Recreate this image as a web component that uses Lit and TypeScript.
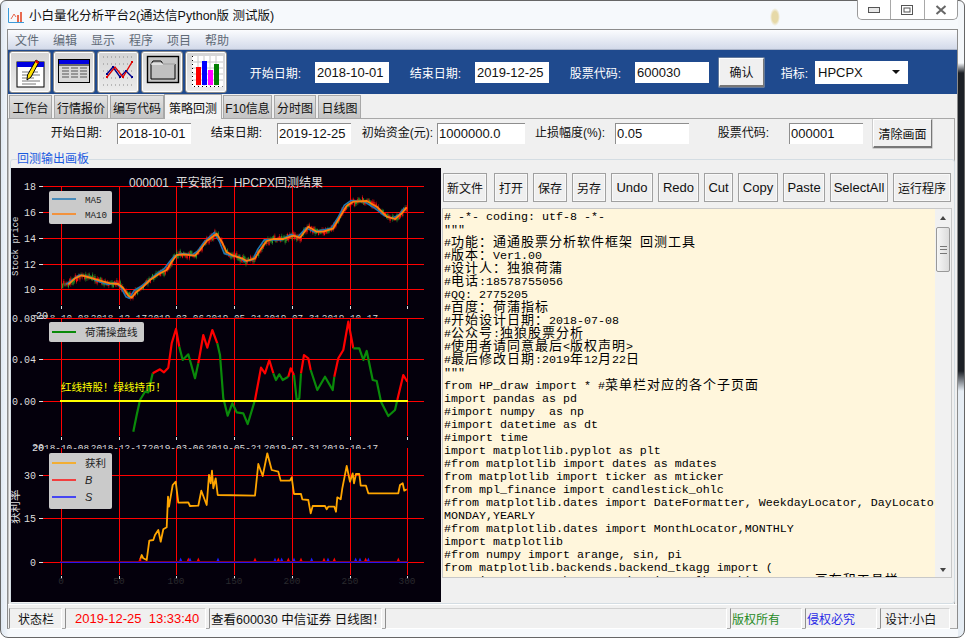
import { html, css, svg, LitElement } from 'lit'
import { customElement } from 'lit/decorators.js'

type Pt = [number, number]

const MA10: Pt[] = [
  [205, 358], [225, 340], [245, 331], [270, 338], [300, 347], [330, 355], [355, 357], [370, 370], [385, 392], [395, 398],
  [410, 380], [430, 365], [450, 345], [480, 325], [500, 315], [515, 290], [530, 270], [550, 268], [585, 272], [600, 255],
  [620, 228], [650, 206], [665, 230], [680, 262], [700, 272], [725, 280], [740, 288], [765, 280], [780, 255], [800, 228],
  [820, 222], [850, 222], [880, 212], [900, 218], [925, 185], [950, 200], [970, 200], [1000, 190], [1020, 155], [1040, 122],
  [1060, 110], [1100, 108], [1130, 125], [1160, 155], [1185, 162], [1205, 145], [1220, 127],
]

// oscillator line, split where the colour changes
const OSC: { color: string; pts: Pt[] }[] = [
  { color: '#0a8a0a', pts: [[400, 350], [410, 300], [420, 255], [435, 230], [445, 232], [458, 175]] },
  { color: '#ff0000', pts: [[458, 175], [480, 163], [492, 172], [505, 158], [515, 85], [528, 42], [538, 95]] },
  { color: '#0a8a0a', pts: [[538, 95], [548, 135], [565, 118], [585, 190], [595, 145]] },
  { color: '#ff0000', pts: [[595, 145], [610, 60], [622, 98], [637, 45], [652, 85]] },
  { color: '#0a8a0a', pts: [[652, 85], [660, 120], [670, 250], [683, 302], [697, 265], [710, 292], [730, 295], [743, 327], [765, 255]] },
  { color: '#ff0000', pts: [[765, 255], [783, 158], [795, 175], [808, 135], [820, 175]] },
  { color: '#0a8a0a', pts: [[820, 175], [828, 195], [838, 178], [848, 195], [865, 185]] },
  { color: '#ff0000', pts: [[865, 185], [872, 160], [882, 180]] },
  { color: '#0a8a0a', pts: [[882, 180], [890, 255], [898, 250], [903, 175]] },
  { color: '#ff0000', pts: [[903, 175], [912, 120], [925, 130], [932, 165]] },
  { color: '#0a8a0a', pts: [[932, 165], [952, 225], [975, 185], [998, 225], [1003, 185]] },
  { color: '#ff0000', pts: [[1003, 185], [1015, 130], [1030, 105], [1045, 20], [1060, 100]] },
  { color: '#0a8a0a', pts: [[1060, 100], [1078, 100], [1090, 135], [1100, 108], [1118, 195], [1130, 198], [1143, 260], [1165, 303], [1185, 285], [1192, 255]] },
  { color: '#ff0000', pts: [[1192, 255], [1210, 180], [1222, 200]] },
]

const PROFIT: Pt[] = [
  [420, 360], [425, 345], [430, 355], [440, 360], [448, 302], [460, 300], [465, 285], [475, 270], [482, 305], [490, 268],
  [500, 262], [504, 170], [507, 200], [512, 170], [518, 135], [527, 125], [535, 188], [565, 187], [570, 198], [595, 197],
  [604, 152], [620, 195], [627, 105], [632, 130], [636, 92], [640, 145], [647, 115], [653, 165], [765, 167], [775, 72],
  [788, 108], [802, 40], [815, 90], [835, 95], [842, 122], [870, 122], [875, 112], [882, 162], [903, 162], [907, 178],
  [925, 180], [932, 220], [938, 198], [975, 198], [980, 208], [985, 200], [1003, 200], [1008, 215], [1012, 172], [1022, 178],
  [1027, 145], [1040, 78], [1050, 125], [1058, 100], [1062, 130], [1068, 102], [1078, 102], [1082, 137], [1098, 137], [1105, 160],
  [1195, 160], [1200, 135], [1208, 130], [1213, 152], [1220, 148],
]

const BUYS = [420, 565, 595, 765, 835, 865, 903, 972, 1003, 1097, 1195]
const SELLS = [542, 570, 654, 825, 845, 882, 935, 984, 1067, 1080, 1105]
const GRID_X = [61, 119, 176, 234, 292, 350, 407]
const DATES = ['2018-10-08', '2018-12-17', '2019-03-06', '2019-05-21', '2019-07-31', '2019-10-17']

// the traced points were read off a 3x crop
const trace = (pts: Pt[], top: number) => pts.map(([x, y]) => `${(x / 3).toFixed(1)},${(top + y / 3).toFixed(1)}`).join(' ')

const noise = (i: number) => {
  const v = Math.sin(i * 12.9898) * 43758.5453
  return v - Math.floor(v)
}

const maY = (zx: number) => {
  if (zx <= MA10[0][0]) return MA10[0][1]
  for (let i = 1; i < MA10.length; i++) {
    const [x0, y0] = MA10[i - 1]
    const [x1, y1] = MA10[i]
    if (zx <= x1) return y0 + ((y1 - y0) * (zx - x0)) / (x1 - x0)
  }
  return MA10[MA10.length - 1][1]
}

@customElement('backtest-chart')
export class BacktestChart extends LitElement {
  static styles = css`
    :host {
      display: block;
      width: 430px;
      height: 434px;
      background: #04000c;
    }
    svg {
      display: block;
    }
    text {
      font-family: 'Liberation Mono', 'Noto Sans CJK SC', monospace;
      font-size: 10px;
      fill: #dcdcdc;
    }
    .title {
      font-family: 'Liberation Sans', 'Noto Sans CJK SC', sans-serif;
      font-size: 12px;
      text-anchor: middle;
      white-space: pre;
    }
    .ytick {
      text-anchor: end;
    }
    .xtick {
      text-anchor: middle;
      font-size: 9.4px;
    }
    .ylabel {
      font-size: 9px;
    }
    .dim {
      fill: #2a2a2e;
    }
    .legend {
      font-size: 9.2px;
      fill: #222;
    }
    .legend-cn {
      font-family: 'Noto Sans CJK SC', sans-serif;
      font-size: 10.5px;
    }
    .italic {
      font-family: 'Liberation Sans', sans-serif;
      font-style: italic;
      font-size: 11px;
    }
    .note {
      font-family: 'Noto Sans CJK SC', sans-serif;
      font-size: 10.5px;
      fill: #ffff00;
    }
    .axis-cn {
      font-family: 'Noto Sans CJK SC', sans-serif;
      font-size: 11.5px;
    }
  `

  private _grid(ys: number[], top: number, bottom: number) {
    return svg`
      ${ys.map((y) => svg`<line x1="43" x2="424" y1=${y + 0.5} y2=${y + 0.5} stroke="#f00" stroke-width="1"></line>
        <line x1="39" x2="43" y1=${y + 0.5} y2=${y + 0.5} stroke="#ddd"></line>`)}
      ${GRID_X.map((x) => svg`<line x1=${x + 0.5} x2=${x + 0.5} y1=${top} y2=${bottom} stroke="#f00" stroke-width="1"></line>
        <line x1=${x + 0.5} x2=${x + 0.5} y1=${bottom + 1} y2=${bottom + 4} stroke="#ddd"></line>`)}
    `
  }

  private _candles() {
    const bars = []
    for (let i = 0; i < 300; i++) {
      const x = 61.5 + i * 1.153
      const mid = 165 + maY(x * 3) / 3 + (noise(i) - 0.5) * 3.5
      const body = 0.8 + noise(i + 500) * 2.2
      const wick = 0.5 + noise(i + 900) * 1.8
      const color = noise(i + 200) > 0.5 ? '#ff1010' : '#2ca02c'
      bars.push(svg`<line x1=${x} x2=${x} y1=${mid - body - wick} y2=${mid + body + wick} stroke=${color} stroke-width="0.5"></line>
        <rect x=${x - 0.5} y=${mid - body} width="1" height=${body * 2} fill=${color}></rect>`)
    }
    return bars
  }

  private _priceLines() {
    const ma5 = MA10.map(([x, y], i): Pt => [x - 7, y + Math.sin(i * 1.7) * 4])
    return svg`
      <polyline points=${trace(ma5, 165)} fill="none" stroke="#1f77b4" stroke-width="1.6"></polyline>
      <polyline points=${trace(MA10, 165)} fill="none" stroke="#ff7f0e" stroke-width="1.8" stroke-linejoin="round"></polyline>
    `
  }

  private _dateLabels(y: number) {
    return DATES.map((d, i) => svg`<text class="xtick" x=${GRID_X[i]} y=${y}>${d}</text>`)
  }

  render() {
    return html`
      <svg width="430" height="434" viewBox="11 168 430 434">
        <!-- price -->
        ${this._grid([186, 212, 238, 264, 289], 186, 305)}
        ${this._candles()}
        ${this._priceLines()}
        <text class="title" x="226" y="187">000001  平安银行   HPCPX回测结果</text>
        ${[['18', 186], ['16', 212], ['14', 238], ['12', 264], ['10', 289]].map(
          ([t, y]) => svg`<text class="ytick" x="36" y=${Number(y) + 4}>${t}</text>`,
        )}
        <text class="ylabel" transform="translate(18 276) rotate(-90)">Stock price</text>
        <rect x="49" y="191" width="63" height="33" rx="2" fill="#cacaca"></rect>
        <line x1="52" x2="76" y1="199" y2="199" stroke="#1f77b4" stroke-width="1.5"></line>
        <line x1="52" x2="76" y1="214" y2="214" stroke="#ff7f0e" stroke-width="1.5"></line>
        <text class="legend" x="85" y="203">MA5</text>
        <text class="legend" x="85" y="218">MA10</text>
        ${this._dateLabels(321)}

        <!-- oscillator -->
        <rect x="11" y="317.5" width="430" height="125" fill="#04000c"></rect>
        ${this._grid([318, 359, 401], 318, 436)}
        ${OSC.map((s) => svg`<polyline points=${trace(s.pts, 315)} fill="none" stroke=${s.color} stroke-width="2.2" stroke-linejoin="round"></polyline>`)}
        <line x1="60" x2="408" y1="401" y2="401" stroke="#ffff00" stroke-width="2"></line>
        <text class="note" x="61" y="391">红线持股！绿线持币！</text>
        ${[['0.08', 318], ['0.04', 359], ['0.00', 401]].map(
          ([t, y]) => svg`<text class="ytick" x="36" y=${Number(y) + 4}>${t}</text>`,
        )}
        <text x="36" y="319">20</text>
        <rect x="49" y="322" width="95" height="20" rx="2" fill="#cacaca"></rect>
        <line x1="52" x2="76" y1="332" y2="332" stroke="#0a8a0a" stroke-width="2"></line>
        <text class="legend legend-cn" x="85" y="336">荷蒲操盘线</text>
        ${this._dateLabels(451)}

        <!-- profit -->
        <rect x="11" y="449" width="430" height="153" fill="#04000c"></rect>
        ${this._grid([475, 518, 562], 448, 575)}
        <polyline points=${trace(PROFIT, 440)} fill="none" stroke="#ffa500" stroke-width="1.8" stroke-linejoin="round"></polyline>
        <line x1="60" x2="408" y1="561.500" y2="561.500" stroke="#7a0a20" stroke-width="1"></line>
        <line x1="60" x2="408" y1="562.500" y2="562.500" stroke="#2a10f0" stroke-width="1"></line>
        ${BUYS.map((x) => svg`<path d="M${x / 3 - 1.5} 561h3l-1.5 -3.5z" fill="#ff0000"></path>`)}
        ${SELLS.map((x) => svg`<path d="M${x / 3 - 1.5} 561h3l-1.5 -3.5z" fill="#1a1aff"></path>`)}
        ${[['30', 475], ['15', 518], ['0', 562]].map(([t, y]) => svg`<text class="ytick" x="36" y=${Number(y) + 4}>${t}</text>`)}
        <text x="32" y="451">20</text>
        <text class="axis-cn" transform="translate(19 524) rotate(-90)">获利率</text>
        <rect x="49" y="453" width="63" height="56" rx="2" fill="#cacaca"></rect>
        <line x1="52" x2="76" y1="463" y2="463" stroke="#ffa500" stroke-width="1.5"></line>
        <line x1="52" x2="76" y1="480" y2="480" stroke="#ff1010" stroke-width="1.5"></line>
        <line x1="52" x2="76" y1="497" y2="497" stroke="#1a1aff" stroke-width="1.5"></line>
        <text class="legend legend-cn" x="85" y="467">获利</text>
        <text class="legend italic" x="85" y="484">B</text>
        <text class="legend italic" x="85" y="501">S</text>
        ${[0, 50, 100, 150, 200, 250, 300].map(
          (n, i) => svg`<text class="xtick dim" x=${GRID_X[i]} y="584">${n}</text>`,
        )}
      </svg>
    `
  }
}

const CODE = [
  '# -*- coding: utf-8 -*-',
  '"""',
  '#功能：通通股票分析软件框架 回测工具',
  '#版本：Ver1.00',
  '#设计人：独狼荷蒲',
  '#电话:18578755056',
  '#QQ: 2775205',
  '#百度：荷蒲指标',
  '#开始设计日期：2018-07-08',
  '#公众号:独狼股票分析',
  '#使用者请同意最后<版权声明>',
  '#最后修改日期:2019年12月22日',
  '"""',
  'from HP_draw import * #菜单栏对应的各个子页面',
  'import pandas as pd',
  '#import numpy  as np',
  '#import datetime as dt',
  '#import time',
  'import matplotlib.pyplot as plt',
  '#from matplotlib import dates as mdates',
  'from matplotlib import ticker as mticker',
  'from mpl_finance import candlestick_ohlc',
  '#from matplotlib.dates import DateFormatter, WeekdayLocator, DayLocator,',
  'MONDAY,YEARLY',
  '#from matplotlib.dates import MonthLocator,MONTHLY',
  'import matplotlib',
  '#from numpy import arange, sin, pi',
  'from matplotlib.backends.backend_tkagg import (',
  '    FigureCanvasTkAgg, NavigationToolbar2Tk)  #Canvas画布和工具栏',
]

const MENUS = ['文件', '编辑', '显示', '程序', '项目', '帮助']
const TABS = ['工作台', '行情报价', '编写代码', '策略回测', 'F10信息', '分时图', '日线图']
const EDIT_BUTTONS = [
  ['新文件', ''], ['打开', ''], ['保存', ''], ['另存', ''], ['Undo', 'w-undo'], ['Redo', 'w-redo'], ['Cut', 'w-cut'],
  ['Copy', 'w-copy'], ['Paste', 'w-paste'], ['SelectAll', 'w-all'], ['运行程序', 'w-run'],
]

const ICONS = [
  svg`<rect x="8" y="11" width="27" height="25" fill="#fff" stroke="#000"></rect>
    <rect x="8" y="11" width="27" height="5" fill="#0000e0"></rect>
    <path d="M13 21h16M13 24h18M13 27h12M13 30h18M13 33h14" stroke="#777"></path>
    <path d="M27 9l3 2-8 15-4 3 .5-5z" fill="#ffe000" stroke="#000"></path>
    <path d="M27 9l3 2-1 2-3-2z" fill="#d00"></path>`,
  svg`<rect x="5.5" y="8.5" width="31" height="23" fill="#d8d8d8" stroke="#000"></rect>
    <rect x="6" y="9" width="30" height="4" fill="#0000e0"></rect>
    <path d="M6 14h30" stroke="#000"></path>
    <path d="M9 17h7M9 20h7M9 23h7M9 26h7M18 17h7M18 20h7M18 23h7M18 26h7M27 17h7M27 20h7M27 23h7M27 26h7" stroke="#555"></path>`,
  svg`<path d="M6 6h30M6 13h30M6 20h30M6 27h30M6 34h30" stroke="#888" stroke-dasharray="1 3"></path>
    <polyline points="10,23 16,16 23,26 29,20 35,26" fill="none" stroke="#00008b" stroke-width="1.4"></polyline>
    <polyline points="10,26 18,16 26,26 35,11" fill="none" stroke="#e00000" stroke-width="1.4"></polyline>
    <path d="M9 22h2v2H9zM15 15h2v2h-2zM22 25h2v2h-2zM28 19h2v2h-2zM34 25h2v2h-2z" fill="#00008b"></path>
    <path d="M9 25h2v2H9zM25 25h2v2h-2zM34 10h2v2h-2z" fill="#e00000"></path>`,
  svg`<rect x="6.5" y="5.5" width="31" height="26" fill="#c4c4c4" stroke="#000" stroke-width="1.4"></rect>
    <path d="M10 13l2-3h8l2 3h12v15H10z" fill="#c0c0c0" stroke="#000"></path>
    <path d="M10 13h24" stroke="#fff"></path>`,
  svg`<rect x="7" y="5" width="31" height="31" fill="#fff"></rect>
    <path d="M7 11h31M7 17h31M7 23h31M7 29h31M13 5v30M19 5v30M25 5v30M31 5v30" stroke="#c8c8c8"></path>
    <path d="M7.5 5v30.500h30" fill="none" stroke="#000" stroke-dasharray="1 3"></path>
    <rect x="11" y="16" width="5" height="18" fill="#ff0000"></rect>
    <rect x="17" y="10" width="5" height="24" fill="#0000ff"></rect>
    <rect x="23" y="19" width="5" height="15" fill="#ff00ff"></rect>
    <rect x="29" y="13" width="5" height="21" fill="#008000"></rect>`,
]

@customElement('app-root')
export class AppRoot extends LitElement {
  static styles = css`
    :host {
      display: block;
      width: 967px;
      height: 638px;
      font-family: 'Liberation Sans', 'Noto Sans CJK SC', sans-serif;
      font-size: 12px;
      color: #111;
      background: #fff;
      overflow: hidden;
    }
    .window {
      box-sizing: border-box;
      width: 965px;
      height: 638px;
      display: flex;
      flex-direction: column;
      border: 1px solid #666;
      border-radius: 6px 6px 8px 8px;
      background:
        linear-gradient(#f4f7fa 0 62px, #1c2026 72px, #1c2026 370px, #e6edf4 390px) right / 6px 100% no-repeat,
        radial-gradient(5px 9px at 774px 16px, #e6d9a8 60%, transparent),
        linear-gradient(90deg, #dfe8f2, #f6f9fc 8px);
    }
    .title {
      height: 28px;
      flex: none;
      display: flex;
      align-items: flex-start;
      padding-left: 1px;
      margin-left: 6px;
    }
    .title-icon {
      margin-top: 7px;
      flex: none;
    }
    .title-text {
      margin: 7px 0 0 5px;
      font-size: 12.5px;
      line-height: 16px;
      flex: 1;
    }
    .controls {
      display: flex;
      height: 20px;
      margin: -1px 6px 0 0;
      width: 101px;
      box-sizing: border-box;
      border: 1px solid #9a9a9a;
      border-top: none;
      border-radius: 0 0 5px 5px;
      background: #fff;
    }
    .controls span {
      flex: 1;
      display: flex;
      align-items: center;
      justify-content: center;
    }
    .controls span + span {
      border-left: 1px solid #a8a8a8;
    }
    .client {
      box-sizing: border-box;
      width: 951px;
      height: 600px;
      margin-left: 6px;
      border: 1px solid #8c8c8c;
      border-bottom-color: #a8a8a8;
      background: #f0f0f0;
      display: flex;
      flex-direction: column;
    }
    .menu {
      height: 20px;
      flex: none;
      display: flex;
      gap: 14px;
      align-items: center;
      padding-left: 7px;
      color: #5f6a76;
      background: linear-gradient(#fbfcfe, #d3daea);
      border-bottom: 1px solid #aab4c8;
      box-sizing: border-box;
    }
    .toolbar {
      height: 44px;
      flex: none;
      box-sizing: border-box;
      padding-left: 1px;
      display: grid;
      grid-template-columns: 240px 66px 74px 86px 74px 86px 74px 55px 51px 93px;
      align-items: center;
      background: #1f4a8e;
      color: #fff;
    }
    .tools {
      display: flex;
      gap: 2px;
    }
    .tool {
      box-sizing: border-box;
      width: 42px;
      height: 42px;
      border-radius: 3px;
      border: 1px solid #8a8a8a;
      background: linear-gradient(#d4d4d4, #ececec);
      box-shadow: inset 0 0 0 1px #fff;
    }
    .tool svg {
      display: block;
      margin: -1px;
    }
    .label {
      text-align: right;
      padding-right: 14px;
      white-space: pre;
    }
    .toolbar .tight {
      padding-right: 7px;
    }
    .pad-4 {
      padding-right: 4px;
    }
    .pad-10 {
      padding-right: 10px;
    }
    .pad-15 {
      padding-right: 15px;
    }
    .pad-20 {
      padding-right: 20px;
    }
    .input {
      box-sizing: border-box;
      height: 21px;
      line-height: 21px;
      padding-left: 2px;
      font-size: 13px;
      background: #fff;
      color: #111;
    }
    .sunken {
      border-left: 1px solid #8e8e8e;
      border-top: 1px solid #8e8e8e;
      line-height: 19px;
      padding-left: 1px;
    }
    .btn {
      box-sizing: border-box;
      display: flex;
      align-items: center;
      justify-content: center;
      background: #f0f0f0;
      color: #111;
      border: 1px solid #fff;
      border-right-color: #777;
      border-bottom: 2px solid #777;
      box-shadow: 0 0 0 0.5px #aaa;
    }
    .toolbar .btn {
      justify-self: end;
      width: 45px;
      height: 29px;
    }
    .select {
      box-sizing: border-box;
      height: 23px;
      background: #fff;
      color: #111;
      font-size: 13px;
      display: flex;
      align-items: center;
      justify-content: space-between;
      padding: 0 8px 0 3px;
    }
    .caret {
      width: 0;
      height: 0;
      border: 4px solid transparent;
      border-top: 4px solid #111;
      border-bottom: none;
    }
    .tabs {
      height: 24px;
      flex: none;
      box-sizing: border-box;
      padding: 1px 0 0 1px;
      display: grid;
      grid-template-columns: 43px 54px 54px 55px 49px 42px 43px;
      column-gap: 2px;
      justify-content: start;
    }
    .tab {
      display: flex;
      align-items: center;
      justify-content: center;
      white-space: nowrap;
      background: linear-gradient(#e2e2e2, #c4c4c4);
      border: 1px solid #a8a8a8;
      border-bottom: none;
      box-sizing: border-box;
    }
    .tab.active {
      margin: -1px -1px -1px -2px;
      background: #f4f4f4;
      position: relative;
      z-index: 1;
    }
    .content {
      flex: 1;
      min-height: 0;
      margin-right: 2px;
      border-top: 1px solid #a8a8a8;
      border-right: 1px solid #a8a8a8;
      border-left: 1px solid #bdbdbd;
      display: flex;
      flex-direction: column;
    }
    .filters {
      height: 40px;
      flex: none;
      box-sizing: border-box;
      padding-top: 4px;
      margin-left: -1px;
      display: grid;
      grid-template-columns: 109px 74px 86px 74px 86px 88px 90px 74px 100px 74px 69px;
      align-items: start;
    }
    .filters .label {
      line-height: 21px;
    }
    .filters .btn {
      justify-self: end;
      width: 59px;
      height: 29px;
      margin-top: -4px;
    }
    .group {
      flex: 1;
      min-height: 0;
      position: relative;
      margin: 0 -1px 0 1px;
      border: 1px solid #d4dde3;
      border-radius: 3px;
      padding-top: 8px;
      display: flex;
      gap: 1px;
    }
    .legend-title {
      position: absolute;
      top: -7px;
      left: 6px;
      line-height: 13px;
      color: #1a5ae0;
      background: linear-gradient(transparent 6px, #f0f0f0 6px);
    }
    .side {
      flex: 1;
      min-width: 0;
      padding-top: 5px;
    }
    .edit-bar {
      display: flex;
      gap: 5px;
      padding-left: 1px;
      height: 29px;
    }
    .edit-btn {
      box-sizing: border-box;
      width: 34px;
      display: flex;
      align-items: center;
      justify-content: center;
      border: 1px solid #a0a0a0;
      background: #efefef;
      box-shadow: inset 0 0 0 1px #f8f8f8;
      white-space: nowrap;
    }
    .edit-btn:first-child {
      width: 44px;
      margin-right: 2px;
    }
    .w-undo,
    .w-paste {
      font-size: 13px;
      width: 42px;
    }
    .w-redo {
      font-size: 13px;
      width: 41px;
    }
    .w-cut {
      font-size: 13px;
      width: 29px;
    }
    .w-copy {
      font-size: 13px;
      width: 40px;
    }
    .w-all {
      font-size: 13px;
      width: 58px;
    }
    .w-run {
      width: 58px;
    }
    .editor {
      margin-top: 6px;
      height: 370px;
      width: 510px;
      box-sizing: border-box;
      border: 1px solid #c8c8c8;
      background: #fff6dc;
      display: flex;
    }
    .code {
      flex: 1;
      min-width: 0;
      overflow: hidden;
      padding: 2px 0 0 1px;
      font-family: 'Liberation Mono', monospace;
      font-size: 11.67px;
      color: #000;
    }
    .line {
      height: 13px;
      line-height: 13px;
      white-space: pre;
    }
    .cjk {
      font-family: 'Noto Sans CJK SC', sans-serif;
      font-size: 13px;
      line-height: 0;
      letter-spacing: 1px;
    }
    .scroll {
      width: 16px;
      flex: none;
      background: #f1f1f1;
      display: flex;
      flex-direction: column;
      align-items: center;
      justify-content: space-between;
      padding: 7px 0 5px;
      box-sizing: border-box;
      position: relative;
    }
    .arrow-up {
      border: 3.5px solid transparent;
      border-bottom: 4px solid #444;
      border-top: none;
    }
    .arrow-down {
      border: 3.5px solid transparent;
      border-top: 4px solid #444;
      border-bottom: none;
    }
    .thumb {
      position: absolute;
      top: 18px;
      left: 1px;
      width: 14px;
      height: 45px;
      box-sizing: border-box;
      border: 1px solid #999;
      border-radius: 2px;
      background: linear-gradient(90deg, #f6f6f6, #dcdcdc);
      display: flex;
      align-items: center;
      justify-content: center;
    }
    .thumb i {
      width: 7px;
      height: 6px;
      border-top: 1px solid #777;
      border-bottom: 1px solid #777;
      background: linear-gradient(transparent 2px, #777 2px 3px, transparent 3px);
    }
    .status {
      height: 24px;
      flex: none;
      box-sizing: border-box;
      padding: 3px 7px 0 1px;
      display: grid;
      grid-template-columns: 53px 141px 173px 1fr 72px 72px 70px;
      column-gap: 3px;
      border-top: 1px solid #fff;
    }
    .cell {
      box-sizing: border-box;
      border-left: 1px solid #8e8e8e;
      border-top: 1px solid #d0d0d0;
      border-right: 1px solid #fff;
      border-bottom: 1px solid #fff;
      display: flex;
      align-items: center;
      white-space: pre;
      padding-left: 1px;
    }
    .cell.center {
      justify-content: center;
    }
    .time {
      color: #ff0000;
      font-size: 13px;
      padding-left: 9px;
    }
    .msg {
      font-size: 12.5px;
    }
    .green {
      color: #1f8a1f;
    }
    .blue {
      color: #2a2ae6;
    }
    .design {
      padding-left: 4px;
    }
  `

  private _codeLine(line: string) {
    // CJK runs take two cells of the 7px grid
    const parts = line.split(/([\u3000-\u9fff\uff00-\uffef]+)/)
    return html`<div class="line">${parts.map((p, i) => (i % 2 ? html`<span class="cjk">${p}</span>` : p))}</div>`
  }

  render() {
    return html`
      <div class="window">
        <div class="title">
          <svg class="title-icon" width="16" height="15" viewBox="0 0 16 15">
            <path d="M.5 0v14.500H16" fill="none" stroke="#3a9ad9"></path>
            <path d="M3 11l3-5 2 3" fill="none" stroke="#e86a50"></path>
            <path d="M9 7h2v7H9zM12 4h2v10h-2z" fill="#e86a50"></path>
          </svg>
          <div class="title-text">小白量化分析平台2(通达信Python版 测试版)</div>
          <div class="controls">
            <span>
              <svg width="12" height="6" viewBox="0 0 12 6"><rect x=".5" y=".5" width="11" height="5" fill="#e8e8e8" stroke="#555"></rect></svg>
            </span>
            <span>
              <svg width="12" height="10" viewBox="0 0 12 10"><rect x=".5" y=".5" width="11" height="9" fill="none" stroke="#555"></rect><rect x="3" y="3" width="6" height="4" fill="none" stroke="#555"></rect></svg>
            </span>
            <span>
              <svg width="12" height="10" viewBox="0 0 12 10"><path d="M1.500 1l9 8M10.500 1l-9 8" stroke="#666" stroke-width="2"></path></svg>
            </span>
          </div>
        </div>
        <div class="client">
          <div class="menu">${MENUS.map((m) => html`<span>${m}</span>`)}</div>
          <div class="toolbar">
            <div class="tools">
              ${ICONS.map((icon) => html`<div class="tool"><svg width="42" height="42" viewBox="0 0 42 42">${icon}</svg></div>`)}
            </div>
            <div class="label">开始日期:</div>
            <div class="input">2018-10-01</div>
            <div class="label">结束日期:</div>
            <div class="input">2019-12-25</div>
            <div class="label">股票代码:</div>
            <div class="input">600030</div>
            <div class="btn">确认</div>
            <div class="label tight">指标:</div>
            <div class="select">HPCPX<span class="caret"></span></div>
          </div>
          <div class="tabs">
            ${TABS.map((t, i) => html`<div class="tab ${i === 3 ? 'active' : ''}">${t}</div>`)}
          </div>
          <div class="content">
            <div class="filters">
              <div class="label pad-15">开始日期:</div>
              <div class="input sunken">2018-10-01</div>
              <div class="label pad-15">结束日期:</div>
              <div class="input sunken">2019-12-25</div>
              <div class="label pad-4">初始资金(元):</div>
              <div class="input sunken">1000000.0</div>
              <div class="label pad-10">止损幅度(%):</div>
              <div class="input sunken">0.05</div>
              <div class="label pad-20">股票代码:</div>
              <div class="input sunken">000001</div>
              <div class="btn">清除画面</div>
            </div>
            <div class="group">
              <div class="legend-title">回测输出画板</div>
              <backtest-chart></backtest-chart>
              <div class="side">
                <div class="edit-bar">
                  ${EDIT_BUTTONS.map(([t, cls]) => html`<div class="edit-btn ${cls}">${t}</div>`)}
                </div>
                <div class="editor">
                  <div class="code">${CODE.map((l) => this._codeLine(l))}</div>
                  <div class="scroll">
                    <span class="arrow-up"></span>
                    <div class="thumb"><i></i></div>
                    <span class="arrow-down"></span>
                  </div>
                </div>
              </div>
            </div>
          </div>
          <div class="status">
            <div class="cell center">状态栏</div>
            <div class="cell time">2019-12-25  13:33:40</div>
            <div class="cell msg">查看600030 中信证券 日线图！</div>
            <div class="cell"></div>
            <div class="cell green">版权所有</div>
            <div class="cell blue">侵权必究</div>
            <div class="cell design">设计:小白</div>
          </div>
        </div>
      </div>
    `
  }
}
